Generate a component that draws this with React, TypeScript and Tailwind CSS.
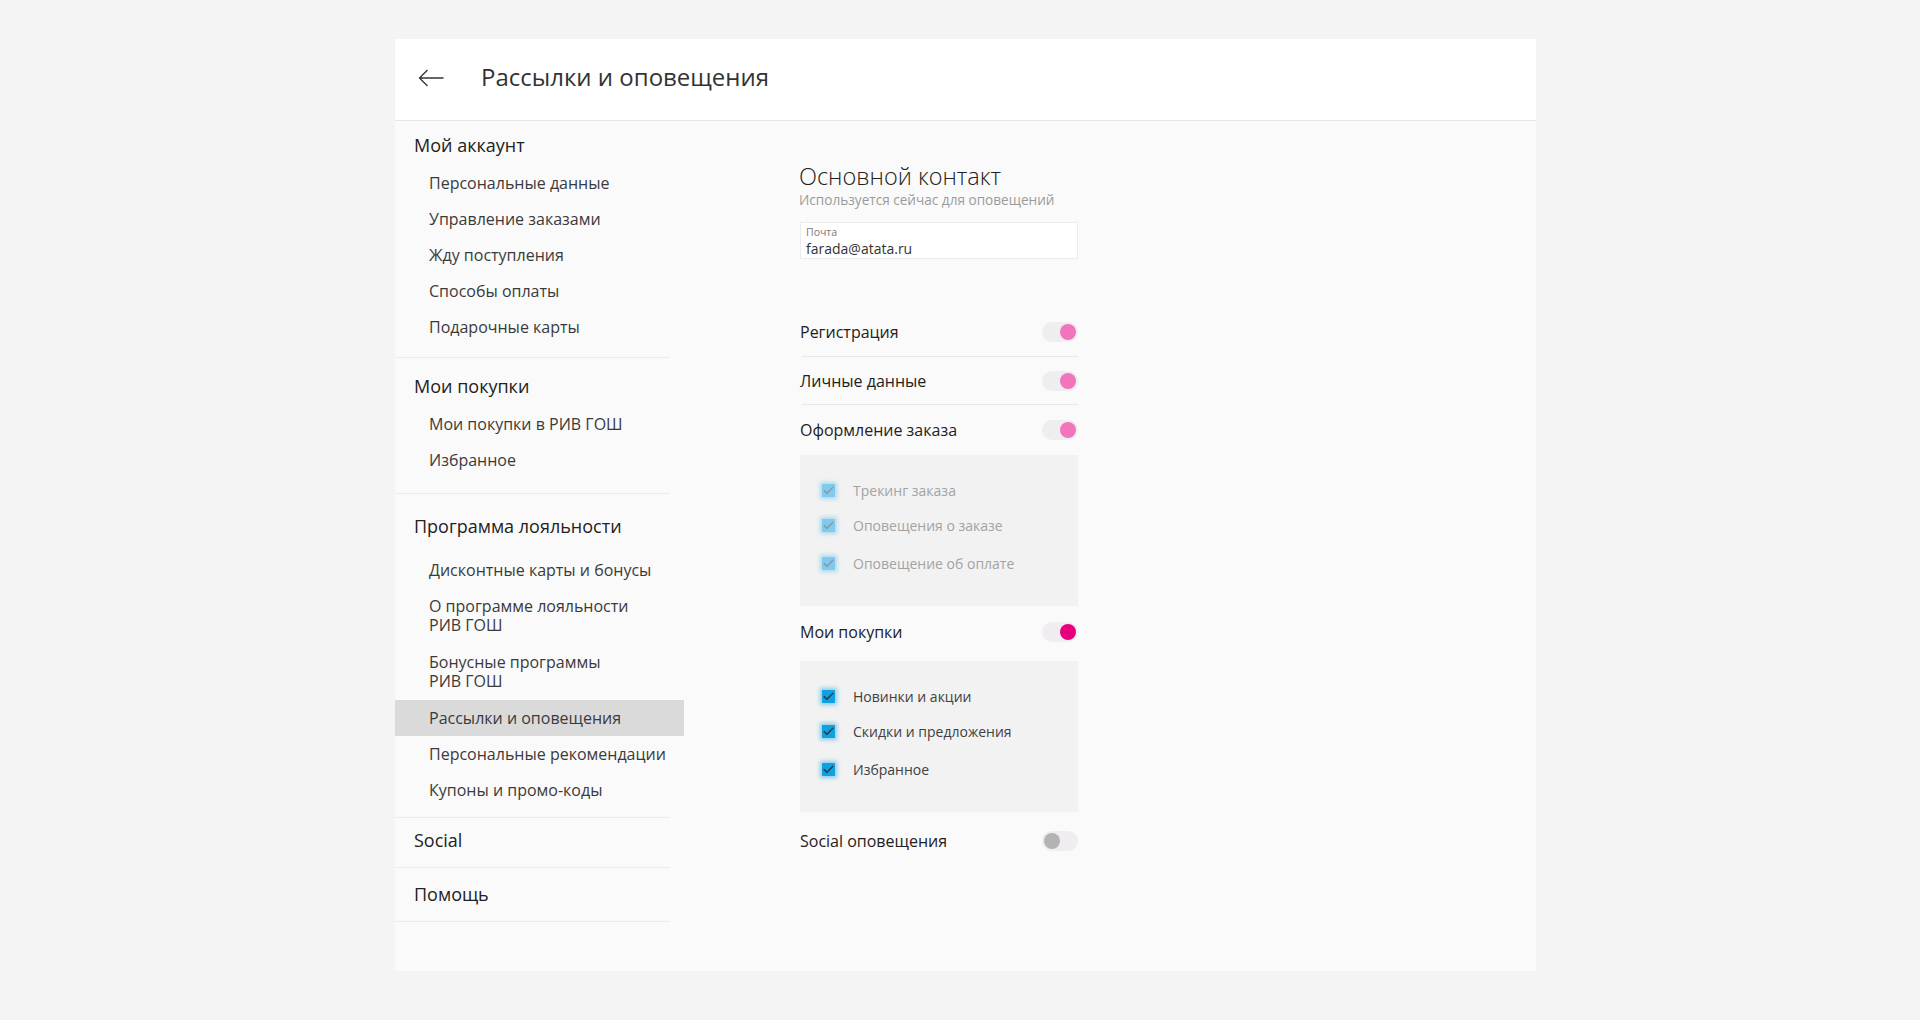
import React from "react";

const font = { fontFamily: '"Open Sans", "Noto Sans", sans-serif' };

function Divider() {
  return <div className="h-px w-[275px] bg-[#ebebeb]" />;
}

function Item({ children, active, two }: { children: React.ReactNode; active?: boolean; two?: boolean }) {
  return (
    <div
      className={`${two ? "h-[56px] py-[9px] leading-[19px]" : "h-[36px] flex items-center"} w-[289px] pl-[34px] text-[16px] text-[#3a3a3a] ${active ? "bg-[#dadada]" : ""}`}
    >
      <div>{children}</div>
    </div>
  );
}

function Heading({ children }: { children: React.ReactNode }) {
  return <div className="pl-[19px] text-[18px] leading-[24px] text-[#222]">{children}</div>;
}

function Toggle({ on, strong }: { on: boolean; strong?: boolean }) {
  return (
    <div className={`relative h-[20px] w-[36px] rounded-full bg-[#efedef] flex items-center ${on ? "justify-end" : "justify-start"} px-[2px]`}>
      <div
        className={`h-[16px] w-[16px] rounded-full ${on ? (strong ? "bg-[#e6007e]" : "bg-[#f075bc]") : "bg-[#b3b3b3]"}`}
      />
    </div>
  );
}

function Check({ label, disabled }: { label: string; disabled?: boolean }) {
  return (
    <div className="flex h-[22px] items-center">
      <div className="ml-[21px] flex h-[14px] w-[14px] items-center justify-center">
        <div
          className={`flex h-[13px] w-[13px] items-center justify-center ${
            disabled ? "bg-[#7fcbee] shadow-[0_0_4px_2px_rgba(127,203,238,0.6)]" : "bg-[#0ea2e2] shadow-[0_0_4px_2px_rgba(14,162,226,0.45)]"
          }`}
        >
          <svg width="11" height="9" viewBox="0 0 11 9" fill="none">
            <path
              d="M1.2 4.6 L4 7.3 L9.8 1.3"
              stroke={disabled ? "#8c9aa3" : "#2f3b44"}
              strokeWidth="1.6"
              strokeLinecap="round"
              strokeLinejoin="round"
            />
          </svg>
        </div>
      </div>
      <div className={`ml-[18px] text-[14px] ${disabled ? "text-[#a3a3a3]" : "text-[#404040]"}`}>{label}</div>
    </div>
  );
}

function CheckBox({ items, disabled }: { items: string[]; disabled?: boolean }) {
  return (
    <div className="h-[151px] w-[278px] bg-[#f2f2f2] pt-[24px]">
      <Check label={items[0]} disabled={disabled} />
      <div className="mt-[13px]">
        <Check label={items[1]} disabled={disabled} />
      </div>
      <div className="mt-[16px]">
        <Check label={items[2]} disabled={disabled} />
      </div>
    </div>
  );
}

function ToggleRow({ label, on, strong, h }: { label: string; on: boolean; strong?: boolean; h: string }) {
  return (
    <div className={`flex ${h} w-[278px] items-center justify-between`}>
      <div className="text-[16px] text-[#222]">{label}</div>
      <Toggle on={on} strong={strong} />
    </div>
  );
}

export default function App() {
  return (
    <div className="min-h-[1020px] w-full bg-[#f4f4f4] pt-[39px]" style={font}>
      <div className="ml-[395px] flex h-[932px] w-[1141px] flex-col bg-[#fafafa]">
        {/* Header */}
        <div className="flex h-[82px] items-center border-b border-[#e6e6e6] bg-white">
          <div className="mb-[3px] ml-[23px] flex h-[20px] w-[26px] items-center">
            <svg width="26" height="18" viewBox="0 0 26 18" fill="none">
              <path d="M25.5 9 H1.5 M9.5 1 L1.5 9 L9.5 17" stroke="#333" strokeWidth="1.3" strokeLinejoin="miter" />
            </svg>
          </div>
          <div className="mb-[5px] ml-[37px] text-[24px] text-[#333]">Рассылки и оповещения</div>
        </div>

        <div className="flex flex-1">
          {/* Sidebar */}
          <div className="w-[289px]">
            <div className="pt-[12px]">
              <Heading>Мой аккаунт</Heading>
              <div className="mt-[8px]">
                <Item>Персональные данные</Item>
                <Item>Управление заказами</Item>
                <Item>Жду поступления</Item>
                <Item>Способы оплаты</Item>
                <Item>Подарочные карты</Item>
              </div>
              <div className="pt-[12px]">
                <Divider />
              </div>
            </div>

            <div className="pt-[16px]">
              <Heading>Мои покупки</Heading>
              <div className="mt-[8px]">
                <Item>Мои покупки в РИВ ГОШ</Item>
                <Item>Избранное</Item>
              </div>
              <div className="pt-[15px]">
                <Divider />
              </div>
            </div>

            <div className="pt-[20px]">
              <Heading>Программа лояльности</Heading>
              <div className="mt-[14px]">
                <Item>Дисконтные карты и бонусы</Item>
                <Item two>
                  О программе лояльности
                  <br />
                  РИВ ГОШ
                </Item>
                <Item two>
                  Бонусные программы
                  <br />
                  РИВ ГОШ
                </Item>
                <Item active>Рассылки и оповещения</Item>
                <Item>Персональные рекомендации</Item>
                <Item>Купоны и промо-коды</Item>
              </div>
              <div className="pt-[9px]">
                <Divider />
              </div>
            </div>

            <div className="pt-[10px]">
              <Heading>Social</Heading>
              <div className="pt-[15px]">
                <Divider />
              </div>
            </div>

            <div className="pt-[14px]">
              <Heading>Помощь</Heading>
              <div className="pt-[15px]">
                <Divider />
              </div>
            </div>
          </div>

          {/* Content */}
          <div className="ml-[114px] w-[282px] pt-[40px]">
            <div className="pl-[1px]">
              <div className="text-[23.5px] font-light leading-[30px] text-[#222]">Основной контакт</div>
              <div className="mt-[0px] text-[13.6px] leading-[18px] text-[#9a9a9a]">Используется сейчас для оповещений</div>
            </div>
            <div className="ml-[2px] mt-[13px] h-[37px] w-[278px] border border-[#ececec] bg-white px-[5px] pt-[3px]">
              <div className="text-[10.5px] leading-[13px] text-[#777]">Почта</div>
              <div className="mt-[1px] text-[14px] leading-[17px] text-[#333]">farada@atata.ru</div>
            </div>

            <div className="ml-[2px] mt-[49px]">
              <ToggleRow label="Регистрация" on h="h-[48px]" />
              <div className="ml-[2px] h-px w-[276px] bg-[#e8e8e8]" />
              <ToggleRow label="Личные данные" on h="h-[47px]" />
              <div className="ml-[2px] h-px w-[276px] bg-[#e8e8e8]" />
              <ToggleRow label="Оформление заказа" on h="h-[50px]" />
              <CheckBox disabled items={["Трекинг заказа", "Оповещения о заказе", "Оповещение об оплате"]} />
              <div className="pb-[3px]">
                <ToggleRow label="Мои покупки" on strong h="h-[52px]" />
              </div>
              <CheckBox items={["Новинки и акции", "Скидки и предложения", "Избранное"]} />
              <div className="pt-[1px]">
                <ToggleRow label="Social оповещения" on={false} h="h-[56px]" />
              </div>
            </div>
          </div>
        </div>
      </div>
    </div>
  );
}
